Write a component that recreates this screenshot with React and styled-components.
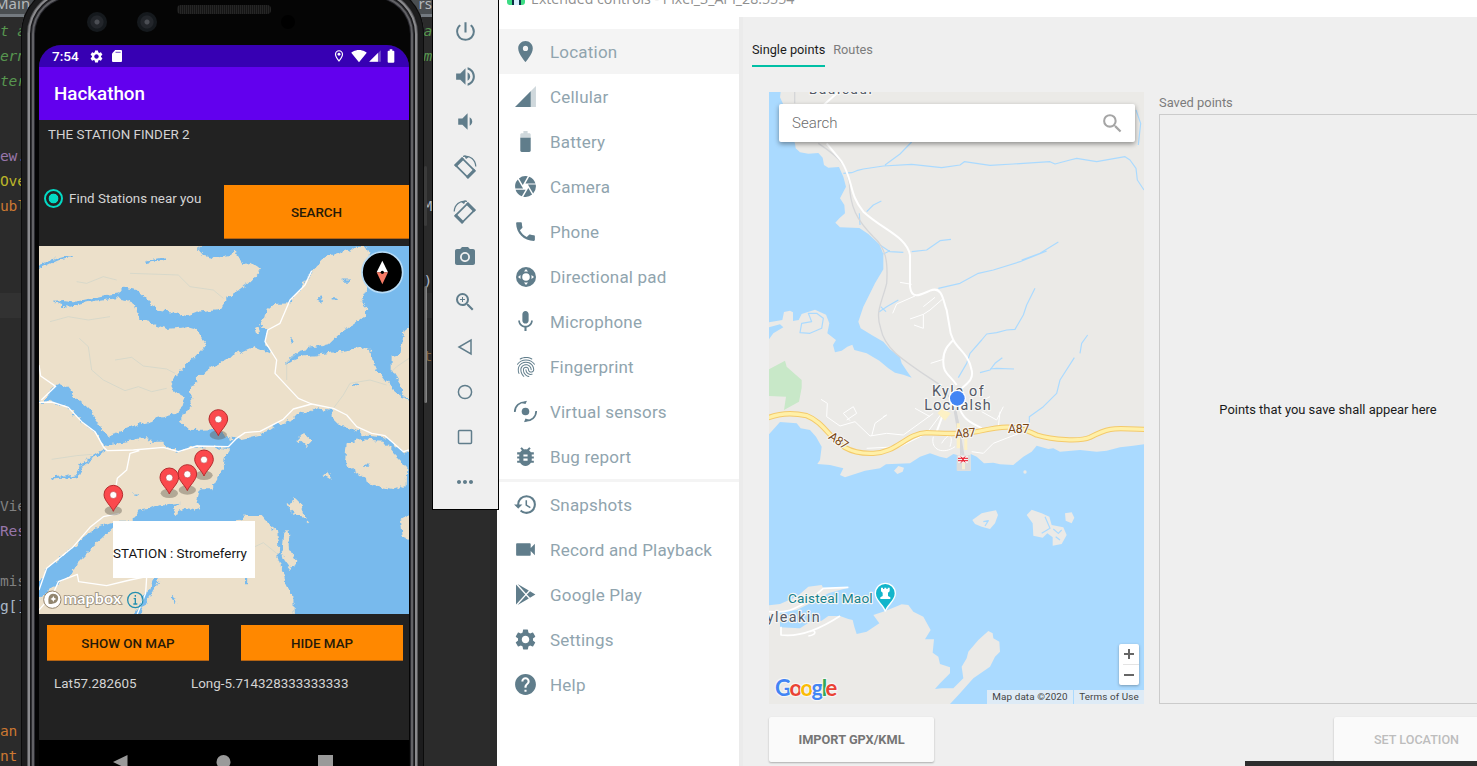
import React from "react";
import styled, { createGlobalStyle } from "styled-components";
import {
  MdLocationOn, MdCamera, MdPhone, MdMic, MdFingerprint, MdBugReport, MdHistory,
  MdVideocam, MdSettings, MdHelp, MdPowerSettingsNew, MdVolumeUp, MdVolumeDown,
  MdPhotoCamera, MdZoomIn, MdMoreHoriz, MdSearch, MdSignalWifi4Bar, MdOutlineLocationOn,
  MdBatteryFull,
} from "react-icons/md";

const GlobalStyle = createGlobalStyle`
  * { box-sizing: border-box; }
  body { margin: 0; font-family: Roboto, "Liberation Sans", sans-serif; }
`;

const Desktop = styled.div`
  position: relative;
  display: flex;
  width: 1477px;
  height: 766px;
  overflow: hidden;
  background: #2b2b2b;
`;

/* ---------- code editor behind the emulator ---------- */
const Editor = styled.div`
  flex: none;
  width: 497px;
  height: 766px;
  overflow: hidden;
  background: #2b2b2b;
`;
const EditorTabs = styled.div`
  display: flex;
  justify-content: space-between;
  height: 18px;
  padding-right: 65px;
  background: linear-gradient(#4a4e51 0 14px, #747a80 14px 17px, #2b2b2b 17px);
  color: #b4b8bb;
  font: 15px/6px "Noto Sans", sans-serif;
  white-space: pre;
`;
const TabName = styled.span`
  margin-left: -5px;
`;
const CodeLine = styled.div`
  display: flex;
  justify-content: space-between;
  height: 25px;
  padding-right: 65px;
  line-height: 25px;
  font-family: "DejaVu Sans Mono", monospace;
  font-size: 14.6px;
  letter-spacing: -0.2px;
  white-space: pre;
  color: ${(p) => p.$color || "#a9b7c6"};
  font-style: ${(p) => (p.$italic ? "italic" : "normal")};
  background: ${(p) => (p.$active ? "#323232" : "transparent")};
`;
const CodeTail = styled.span`
  color: ${(p) => p.$color || "inherit"};
`;

/* ---------- phone ---------- */
const Phone = styled.div`
  position: absolute;
  left: 21px;
  top: -16px;
  width: 403px;
  height: 830px;
  padding: 0 15px 0 18px;
  border-radius: 50px;
  background: #050505;
  box-shadow: inset 0 0 0 1px #0b0b0b, inset 0 0 0 6px #1c1c1d, inset 0 0 0 7px #555558,
    inset 0 0 0 9px #8a8a8d, inset 0 0 0 10px #161618, inset 0 0 0 11px #2c2c30,
    inset 0 0 0 13px #626266, inset 0 0 0 14px #2a2a30;
`;
const Bezel = styled.div`
  display: flex;
  align-items: flex-end;
  height: 61px;
  padding: 0 0 13px 48px;
`;
const Lens = styled.span`
  width: 20px;
  height: 20px;
  margin-right: 30px;
  border-radius: 50%;
  background: radial-gradient(circle, #4b4e54 0 2px, #23262b 3px 6px, #15191d 7px);
`;
const Speaker = styled.span`
  width: 94px;
  height: 9px;
  margin: 0 10px 18px -10px;
  border-radius: 4px;
  background: repeating-linear-gradient(90deg, #151515 0 1px, #262626 1px 2px);
`;
const Sensor = styled.span`
  width: 14px;
  height: 14px;
  margin-bottom: 3px;
  border-radius: 50%;
  background: #000;
`;
const Screen = styled.div`
  display: flex;
  flex-direction: column;
  width: 370px;
  height: 760px;
  overflow: hidden;
  border-radius: 22px 22px 0 0;
  background: #222;
  color: #d4d4d4;
`;
const StatusBar = styled.div`
  display: flex;
  align-items: center;
  flex: none;
  height: 22px;
  padding: 0 10px 0 13px;
  background: #3700b3;
  color: #fff;
  font-size: 13.6px;
  font-weight: 500;
  svg { display: block; }
`;
const StatusIcons = styled.div`
  display: flex;
  align-items: center;
  gap: ${(p) => p.$gap}px;
  margin-left: ${(p) => p.$push};
`;
const StatusGap = styled.span`
  width: ${(p) => p.$w}px;
`;
const AppBar = styled.div`
  flex: none;
  height: 53px;
  padding-left: 15px;
  background: #6200ee;
  color: #fff;
  font-size: 18.8px;
  font-weight: 500;
  line-height: 55px;
`;
const AppHeading = styled.div`
  flex: none;
  height: 65px;
  padding: 6px 0 0 9px;
  font-size: 13.4px;
  line-height: 17px;
`;
const SearchRow = styled.div`
  display: flex;
  flex: none;
  height: 61px;
`;
const RadioLabel = styled.div`
  display: flex;
  align-items: center;
  gap: 6px;
  width: 185px;
  height: 26px;
  padding-left: 5px;
  font-size: 13.4px;
`;
const RadioDot = styled.span`
  width: 19px;
  height: 19px;
  border: 2px solid #03dac5;
  border-radius: 50%;
  background: radial-gradient(circle, #03dac5 0 4.5px, transparent 5.2px);
`;
const OrangeButton = styled.div`
  width: ${(p) => p.$w}px;
  height: ${(p) => p.$h}px;
  border-bottom: 1px solid #b56413;
  background: #ff8800;
  color: #261a08;
  font-size: 13.4px;
  font-weight: 500;
  line-height: ${(p) => p.$h + 1}px;
  text-align: center;
`;
const PhoneMap = styled.div`
  position: relative;
  flex: none;
  height: 368px;
  svg { display: block; }
`;
const MapPopup = styled.div`
  position: absolute;
  left: 74px;
  top: 275px;
  width: 142px;
  height: 57px;
  background: #fff;
  color: #161616;
  font-size: 13.4px;
  line-height: 65px;
  white-space: nowrap;
`;
const ButtonRow = styled.div`
  display: flex;
  flex: none;
  justify-content: space-between;
  height: 59px;
  padding: 11px 6px 0 8px;
`;
const Coordinates = styled.div`
  display: flex;
  flex: none;
  height: 67px;
  padding-left: 15px;
  font-size: 13.4px;
  line-height: 21px;
`;
const Latitude = styled.span`
  width: 137px;
`;
const NavBar = styled.div`
  display: flex;
  flex: none;
  height: 60px;
  padding: 15px 0 0 74px;
  background: #000;
  svg { display: block; }
`;
const SideKey = styled.div`
  position: absolute;
  left: 424px;
  top: ${(p) => p.$top}px;
  width: 3px;
  height: ${(p) => p.$h}px;
  border-radius: 2px;
  background: ${(p) => (p.$bright ? "linear-gradient(90deg, #4a4a4a, #909090)" : "#3b3b3b")};
`;

/* ---------- emulator toolbar ---------- */
const Toolbar = styled.div`
  position: absolute;
  left: 432px;
  top: -1px;
  display: flex;
  flex-direction: column;
  align-items: center;
  width: 67px;
  height: 511px;
  padding: 9px 1px 0 0;
  border: 1px solid #000;
  background: #efefef;
  color: #607d8b;
`;
const ToolButton = styled.div`
  display: flex;
  align-items: center;
  justify-content: center;
  width: 44px;
  height: 45px;
`;

/* ---------- extended controls window ---------- */
const ControlsWindow = styled.div`
  display: flex;
  flex-direction: column;
  flex: none;
  width: 1040px;
  height: 766px;
  background: #fff;
`;
const TitleBar = styled.div`
  display: flex;
  flex: none;
  height: 17px;
  padding-left: 10px;
  overflow: hidden;
  color: #8f8f8f;
  font: 14.2px/20px "Open Sans", sans-serif;
`;
const AppGlyph = styled.span`
  width: 18px;
  height: 5px;
  margin-right: 6px;
  border-radius: 0 0 3px 3px;
  background: linear-gradient(90deg, #3ddc84 0 5px, #0b3045 5px 7px, #d7effe 7px 12px, #0b3045 12px 14px, #3ddc84 14px);
`;
const TitleText = styled.span`
  height: 20px;
  margin-top: -11px;
  white-space: nowrap;
`;
const WindowBody = styled.div`
  display: flex;
  flex: 1;
`;
const Sidebar = styled.div`
  flex: none;
  width: 242px;
  padding-top: 12px;
  background: #fff;
`;
const SidebarDivider = styled.div`
  height: 3px;
  background: #f4f4f4;
`;
const MenuItem = styled.div`
  display: flex;
  align-items: center;
  gap: 12px;
  height: 45px;
  padding-left: 16px;
  background: ${(p) => (p.$active ? "#f4f4f4" : "transparent")};
  color: #90a4ae;
  font-size: 17px;
  letter-spacing: 0.2px;
  white-space: nowrap;
  svg { display: block; flex: none; color: #607d8b; }
`;
const MenuIcon = styled.span`
  display: flex;
  align-items: center;
  justify-content: center;
  width: 25px;
  height: 25px;
`;
const Content = styled.div`
  display: flex;
  flex-direction: column;
  flex: 1;
  padding-left: 30px;
  background: linear-gradient(90deg, #ebebeb 4px, #efefef 4px);
`;
const Tabs = styled.div`
  display: flex;
  gap: 8px;
  height: 75px;
  margin-left: -17px;
  padding-top: 21px;
`;
const Tab = styled.div`
  height: 29px;
  border-bottom: 2px solid ${(p) => (p.$active ? "#00bfa5" : "transparent")};
  color: ${(p) => (p.$active ? "#1c1c1c" : "#7c7c7c")};
  font-size: 12.75px;
  line-height: 23px;
`;
const Panels = styled.div`
  display: flex;
  gap: 15px;
  height: 612px;
`;
const MapPanel = styled.div`
  position: relative;
  width: 375px;
  height: 612px;
  > svg { display: block; }
`;
const SearchBox = styled.div`
  position: absolute;
  left: 10px;
  top: 12px;
  display: flex;
  align-items: center;
  justify-content: space-between;
  width: 356px;
  height: 38px;
  padding: 0 10px 0 13px;
  border-radius: 2px;
  background: #fff;
  box-shadow: 0 2px 5px rgba(0, 0, 0, 0.4);
  color: #6c6c6c;
  font-size: 15px;
  font-weight: 300;
  svg { color: #a5a5a5; }
`;
const ZoomControl = styled.div`
  position: absolute;
  right: 5px;
  bottom: 19px;
  width: 20px;
  height: 41px;
  border-radius: 2px;
  background: #fff;
  box-shadow: 0 1px 3px rgba(0, 0, 0, 0.3);
  svg { display: block; }
`;
const MapFooter = styled.div`
  position: absolute;
  right: 0;
  bottom: 0;
  display: flex;
  gap: 1px;
  height: 14px;
  color: #444;
  font-size: 9.9px;
  line-height: 14px;
  letter-spacing: 0.1px;
`;
const FooterCell = styled.span`
  width: ${(p) => p.$w}px;
  background: #deebf6;
  text-align: center;
  white-space: nowrap;
`;
const SavedPanel = styled.div`
  display: flex;
  flex-direction: column;
  width: 338px;
`;
const SavedTitle = styled.div`
  height: 22px;
  color: #7c7c7c;
  font-size: 12.9px;
  line-height: 21px;
`;
const SavedList = styled.div`
  display: flex;
  align-items: center;
  justify-content: center;
  flex: 1;
  border: 1px solid #cbcbcb;
  color: #1a1a1a;
  font-size: 12.92px;
`;
const Actions = styled.div`
  display: flex;
  justify-content: space-between;
  width: 730px;
  padding-top: 13px;
`;
const ActionButton = styled.div`
  width: 165px;
  height: 45px;
  border-radius: 2px;
  background: #fafafa;
  box-shadow: 0 1px 2px rgba(0, 0, 0, 0.28);
  color: ${(p) => (p.$disabled ? "#bdbdbd" : "#757575")};
  font-size: ${(p) => (p.$disabled ? 12.6 : 12.75)}px;
  font-weight: ${(p) => (p.$disabled ? 500 : 700)};
  line-height: 46px;
  text-align: center;
`;
const Taskbar = styled.div`
  position: absolute;
  left: 1245px;
  top: 761px;
  width: 232px;
  height: 5px;
  background: #2e2e2e;
`;

/* ---------- drawn icons ---------- */
const CellularIcon = ({ size = 25, fill = "currentColor" }) => (
  <svg width={size} height={size} viewBox="0 0 24 24">
    <path d="M2 22H22V2Z" fill={fill} opacity=".3" />
    <path d="M2 22H17V7Z" fill={fill} />
  </svg>
);
const BatteryIcon = () => (
  <svg width="25" height="25" viewBox="0 0 24 24" fill="currentColor">
    <path d="M17 5.3C17 4.6 16.4 4 15.7 4H14V2H10V4H8.300C7.600 4 7 4.600 7 5.300V9H17Z" opacity=".3" />
    <path d="M7 8.500V20.700C7 21.400 7.600 22 8.300 22H15.700C16.400 22 17 21.400 17 20.700V8.500Z" />
  </svg>
);
const DpadIcon = () => (
  <svg width="24" height="24" viewBox="0 0 24 24">
    <circle cx="12" cy="12" r="10" fill="currentColor" />
    <circle cx="12" cy="12" r="3.800" fill="#fff" />
    <path d="M12 4L14 6.500H10ZM12 20L10 17.500H14ZM4 12L6.500 10V14ZM20 12L17.500 14V10Z" fill="#fff" />
  </svg>
);
const SensorsIcon = () => (
  <svg width="25" height="25" viewBox="0 0 25 25">
    <circle cx="12.500" cy="12.500" r="3.800" fill="currentColor" />
    <path d="M1.800 13C1.800 7 6.500 2.800 13 3M23.200 12C23.200 18 18.500 22.200 12 22" fill="none" stroke="currentColor" strokeWidth="1.700" />
    <path d="M8 4L14 1.800L12.500 5ZM17 21L11 23.200L12.500 19.500Z" fill="currentColor" />
  </svg>
);
const PlayIcon = () => (
  <svg width="25" height="25" viewBox="0 0 25 25" fill="currentColor">
    <path d="M3 2.500L12.200 12.500L3 22.500ZM4.600 2L15.800 8.500L13 11.400ZM4.600 23L15.800 16.500L13 13.600ZM17 9.300L22.400 12.500L17 15.700L13.900 12.500Z" />
  </svg>
);
const RotateIcon = ({ mirror }) => (
  <svg width="26" height="26" viewBox="0 0 26 26">
    <g transform={mirror ? "translate(26 0) scale(-1 1)" : undefined}>
      <path d="M3.500 11.200L10.300 4.400L22.500 16.600L15.700 23.400Z" fill="none" stroke="currentColor" strokeWidth="1.700" />
      <path d="M2 11L10 3L12.200 5.200L4.200 13.200ZM13.800 22.800L21.800 14.800L24 17L16 25Z" fill="currentColor" />
      <path d="M11 2.400C18.500 1.200 23.400 6 23.800 12.500" fill="none" stroke="currentColor" strokeWidth="1.200" />
      <path d="M12 1.200L17 3L14 5Z" fill="currentColor" />
    </g>
  </svg>
);
const BackIcon = () => (
  <svg width="20" height="20" viewBox="0 0 20 20">
    <path d="M16 3V17L4 10Z" fill="none" stroke="currentColor" strokeWidth="1.500" />
  </svg>
);
const HomeIcon = () => (
  <svg width="20" height="20" viewBox="0 0 20 20">
    <circle cx="10" cy="10" r="6.600" fill="none" stroke="currentColor" strokeWidth="1.500" />
  </svg>
);
const OverviewIcon = () => (
  <svg width="20" height="20" viewBox="0 0 20 20">
    <rect x="3.500" y="3.500" width="13" height="13" rx="1" fill="none" stroke="currentColor" strokeWidth="1.500" />
  </svg>
);
const SdIcon = () => (
  <svg width="10" height="12" viewBox="0 0 10 12">
    <path d="M3.200 0H9Q10 0 10 1V11Q10 12 9 12H1Q0 12 0 11V3.500Z" fill="#fff" />
    <path d="M3.500 2.300H8.600" stroke="#3700b3" strokeWidth=".7" />
  </svg>
);

/* ---------- maps ---------- */
const PINS = [[655, 587], [612, 708], [562, 752], [508, 762], [340, 814]];

const LochMap = () => (
  <svg width="370" height="368" viewBox="117 18 1110 1104">
    <defs>
      <filter id="coast" x="0" y="0" width="100%" height="100%">
        <feTurbulence type="fractalNoise" baseFrequency=".05" numOctaves="3" seed="4" result="n" />
        <feDisplacementMap in="SourceGraphic" in2="n" scale="22" xChannelSelector="R" yChannelSelector="G" />
      </filter>
    </defs>
    <rect x="117" y="18" width="1110" height="1104" fill="#78baed" />
    <g filter="url(#coast)" fill="#ece0ca">
      <path d="M80 -30H612L597 28L612 45L650 53L690 45L700 33L716 40L727 75L750 65L775 80L778 95L765 110L745 130L720 150L680 175L670 205L620 212L590 215L555 228L520 215L490 212L468 208L455 190L435 172L410 150L370 140L357 160L320 165L250 180L220 187L190 183L160 185L180 197L210 200L260 190L300 182L350 175L380 180L405 195L412 215L418 240L440 240L465 255L500 267L560 262L590 270L605 290L618 302L612 320L580 355L545 385L510 430L520 450L555 470L548 500L525 522L440 547L400 557L360 575L325 585L308 575L295 545L265 505L225 470L200 440L180 430L165 440L130 480L80 490Z" />
      <path d="M80 485H150L205 503L245 545L285 575L305 612L320 615L345 610L400 600L440 592L450 605L490 605L497 622L530 635L570 620L640 618L690 630L675 655L662 700L635 748L600 748L590 785L600 800L570 812L550 810L525 822L522 800L540 788L500 793L475 793L440 810L410 815L405 835L380 845L340 845L290 862L220 920L140 985L117 1030H80Z" />
      <path d="M80 1170V1110L130 1070L175 1025L215 1000L230 970L280 920L340 865L380 850H700L740 828L785 828L800 845L830 870L838 910L835 960L850 1000L860 1040L880 1070L883 1170Z" />
      <path d="M540 545L555 520L575 490L570 460L580 430L620 390L680 355L760 320L808 340L795 305L800 270L780 260L795 235L800 210L820 192L870 190L900 150L935 95L975 55L1020 40L1070 20L1100 22L1110 60L1100 150L1082 185L1103 205L1090 230L1050 260L1015 285L990 310L900 330L865 355L860 372L890 352L940 345L1020 335L1090 322L1110 330L1118 365L1140 400L1170 440L1210 472L1270 495V650L1210 635L1155 592L1100 587L1060 568L1025 560L995 530V510L950 502L930 520L900 515L880 537L830 552L780 585L710 600L680 592L650 568L570 570Z" />
      <path d="M1270 225L1214 270L1200 345L1175 352L1175 390L1200 430L1212 468L1270 490Z" />
      <path d="M1040 610L1080 598L1150 602L1180 640L1222 682L1220 735L1180 748L1120 735L1060 690L1035 670Z" />
      <path d="M895 600L912 582L935 602L918 622ZM970 705L985 695L995 720ZM860 790L885 778L905 795L917 835L895 830L870 810ZM850 875L866 870L870 925L886 960L875 990L853 960L845 930ZM1270 800L1200 840L1205 890L1270 915ZM922 840L932 848L925 855ZM765 270L775 265L780 278L768 280Z" />
    </g>
    <g fill="none" stroke="#78baed" strokeWidth="7" filter="url(#coast)">
      <path d="M117 80C145 78 155 52 215 48M440 66L495 55M155 715L195 712L235 705L243 675L290 645L315 632M865 365C900 340 920 345 950 342M400 764H416M515 1067L528 1090M738 1010V1030M1025 122H1050M955 175L968 182M995 175H1010M870 302L877 298M1060 435L1075 428M1095 677H1108" />
      <path d="M470 1010L460 1040L435 1075L412 1125" strokeWidth="15" />
    </g>
    <g fill="none" stroke="#cdd4ca" strokeWidth="2">
      <path d="M238 295L265 320L275 390L310 420L375 452L415 440L455 455L500 445M345 360L395 352L430 378L500 387L525 400M230 125L260 130L310 110L350 120M155 658L230 647L275 643M390 100L480 103L535 105L570 140L640 150L670 175M150 245L205 230L265 240L330 230" />
      <path d="M1227 355L1190 380L1175 395M1000 505L1030 465L1050 430L1110 420L1160 435M765 920L790 908L830 940M860 420V365L890 340" />
    </g>
    <g fill="none" stroke="#fff" strokeWidth="4" strokeLinejoin="round">
      <path d="M117 375L122 408L167 439L124 480M117 487L155 486L205 502L245 545L285 575L310 620L322 632L400 630L490 622L535 635L590 618L685 620L710 595L735 578L780 574L850 538L880 507L935 492L1000 505L1040 525L1070 560L1115 580L1155 587L1210 635L1227 630M935 492L895 475L825 400L830 360L795 305L803 270L840 250L870 180L915 135L935 92M418 632L390 640L380 690L352 715L345 755M358 820L310 830L270 862L220 920L140 985L117 1050M117 1110L160 1060L175 1025L232 1003L236 1025L320 1037L390 1020L440 1010L437 1060L412 1122" />
    </g>
    {PINS.map(([x, y]) => (
      <g key={x} transform={`translate(${x} ${y})`}>
        <ellipse cy="-2" rx="26" ry="14" fill="#5c5549" opacity=".4" />
        <path d="M0 0C-5 -14 -28 -32 -28 -50A28 28 0 0 1 28 -50C28 -32 5 -14 0 0Z" fill="#fb494d" stroke="#b52a2c" strokeWidth="3" />
        <circle cy="-49" r="10.500" fill="#fff" stroke="#b52a2c" strokeWidth="1.500" />
      </g>
    ))}
    <circle cx="1147" cy="97" r="61" fill="#000" stroke="#b7dcf7" strokeWidth="5" />
    <path d="M1147 62L1164 97H1130Z" fill="#fff" />
    <path d="M1147 133L1164 97H1130Z" fill="#f67b66" />
    <circle cx="1147" cy="97" r="5" fill="#000" />
    <g transform="translate(0 720)">
      <circle cx="157" cy="359" r="26" fill="#fff" stroke="#96866e" strokeWidth="3" />
      <path d="M146 371C143 352 147 342 159 341C172 341 177 351 173 361C169 371 158 373 146 371Z" fill="#92866f" />
      <path d="M160 348L163 354L169 357L163 360L160 366L157 360L151 357L157 354Z" fill="#fff" />
      <text x="191" y="373" fontFamily="Lato" fontWeight="700" fontSize="48" textLength="173" fill="#fff" stroke="#958b78" strokeWidth="5" paintOrder="stroke">mapbox</text>
      <circle cx="406" cy="360" r="23" fill="none" stroke="#258fb0" strokeWidth="4" />
      <path d="M401 356H406V372M400 372H412M406 345V350" fill="none" stroke="#258fb0" strokeWidth="4" />
    </g>
  </svg>
);

const haloText = { paintOrder: "stroke", stroke: "#f6f6f4", strokeWidth: 7, strokeLinejoin: "round" };

const KyleMap = () => (
  <svg width="375" height="612" viewBox="27 276 1125 1836">
    <rect x="27" y="276" width="1125" height="1836" fill="#ebeae7" />
    <g fill="#aadaff">
      <path d="M27 276H62L60 292L72 318L90 400L105 430L107 445L120 457L145 461L175 459L188 473L192 495L205 503L237 501L250 530L258 560L240 595L253 615L255 640L238 655L226 668L240 682L298 684L325 702L358 733L370 762V808L345 850L325 890L310 920L300 950L295 965L302 985L335 1005L370 1025L390 1048L420 1072L425 1090L442 1115L455 1133L430 1124L405 1118L385 1105L358 1082L320 1060L283 1050L277 1034L262 1040L245 1052L225 1057L219 1035L228 1020L202 1000L208 970L198 944L165 929L125 942L116 960L99 963V937L90 932L72 936L67 960L27 967Z" />
      <path d="M27 982L60 973L70 982L40 1000L27 1018Z" />
      <path d="M27 1303L60 1266L110 1270L122 1285L150 1290L168 1310L185 1340L180 1380L172 1392L210 1395L250 1405L240 1425L255 1432L315 1412L360 1405L378 1393L450 1390L480 1370L510 1360L540 1370L560 1375L580 1362L592 1365V1412H632V1362L650 1370L672 1390L700 1388L720 1393L760 1395L790 1370L815 1355L830 1337L865 1347L880 1345L900 1355L960 1350L1010 1355L1040 1352L1080 1342L1120 1337L1152 1333V2112H570L600 2080L640 2035L690 2000L705 1970L720 1955L718 1925L700 1915L698 1900L685 1893L655 1920L625 1955L620 1975L605 2000L610 2035L580 2065H545L525 2067L540 2050L570 2020V2002L540 1992L535 1970L518 1958L522 1918L495 1918L512 1890L490 1850L460 1835L445 1815L425 1813L376 1833L340 1845L358 1870L320 1895L290 1902L283 1880L278 1860L265 1857L240 1848L205 1848L185 1862L150 1865L120 1885L60 1882V1835L110 1830L170 1800L205 1780L270 1762L190 1765L185 1755L145 1760L110 1790L60 1812L27 1816Z" />
    </g>
    <g fill="#ebeae7">
      <path d="M637 1560L665 1540L685 1535L708 1531L714 1545L705 1570L690 1587L665 1580L645 1572ZM800 1545L815 1529L845 1540L868 1550L875 1575L910 1582L920 1605L905 1632L878 1637L878 1612L862 1600L848 1613L820 1607L818 1570ZM915 1540L935 1537L943 1553L935 1570L917 1562ZM402 1412L415 1398L432 1403L428 1415L412 1422Z" />
      <circle cx="795" cy="1416" r="5" />
    </g>
    <path d="M27 1108L75 1082L80 1100L125 1140V1163L117 1205L72 1230L78 1190L27 1188Z" fill="#c8e8c8" />
    <g fill="none" stroke="#aadaff" strokeWidth="3.500" strokeLinejoin="round">
      <path d="M250 520L275 518L290 512L310 507L370 498L455 493L545 503L600 495L613 485L690 496L760 492L870 485L885 492L930 480L950 475L1010 485L1095 470L1110 480L1128 505L1132 540L1152 570M375 495L420 462L455 426M1128 330L1142 370L1135 435M320 635L340 615L364 603M300 675L298 640M360 735L390 755L430 757M455 755L500 750L540 722L573 718M785 780L840 760L895 726M370 762L390 752M535 865L600 850L655 820L700 810L780 785L860 753M358 935L380 920L415 900M362 920L378 935M595 1133L620 1090L630 1060L665 1020L680 1002L710 998L740 990L765 988L790 945L800 915L825 865M660 1118L690 1110L705 1090L727 1073M690 1107L710 1105L762 1107M983 1005L965 1030L960 1060M943 1073L900 1140L890 1180L850 1220L808 1250V1268M120 998L125 970L155 965L145 940L170 940L190 955L185 985L150 1000ZM670 1565L685 1562L675 1578M855 1550L870 1585L845 1600M880 1587L895 1600L905 1590M887 1610L900 1620" />
    </g>
    <g fill="none" stroke="#d5d6d8" strokeWidth="4">
      <path d="M104 276V310M175 430C250 480 260 500 268 550C270 620 290 660 340 710C380 745 384 790 380 850C365 910 345 935 362 985C375 1050 430 1080 540 1155C595 1210 602 1280 603 1400" />
      <path d="M585 1230L615 1400" strokeWidth="9" />
    </g>
    <g fill="none" stroke="#fff" strokeLinejoin="round">
      <path d="M235 276L180 325M200 430L245 485C280 540 265 580 310 635C370 690 440 710 450 765V860C455 900 480 885 510 872C550 855 550 910 560 930L572 1000L580 1020C565 1035 550 1050 550 1080C548 1120 565 1120 590 1155M580 1020C595 1050 625 1060 635 1110C642 1140 620 1150 600 1170L595 1215C610 1265 640 1270 665 1285M550 1240L530 1295" strokeWidth="6" />
      <path d="M420 847L455 853M465 888L410 912L398 940M548 897L510 930L490 943L450 957M490 943V985L462 975M525 892L490 920M550 1078L512 1090M183 1198L202 1210L200 1250L240 1278L285 1265L330 1308L380 1300L430 1305L520 1240M270 1262L250 1240L280 1220L290 1240L260 1260M335 1308L345 1270L380 1245L370 1250M320 1345L420 1340L500 1300L545 1240M520 1310C510 1350 550 1365 585 1340M545 1330C570 1290 580 1310 570 1340M635 1355L670 1360L700 1330L790 1295M665 1235L710 1260L730 1220M690 1190L650 1210M715 1280L720 1235M465 1225L510 1250" strokeWidth="3" />
      <path d="M27 1835C80 1840 100 1830 150 1800L190 1765L265 1762M63 1880V1905C100 1910 160 1900 240 1848M145 1908C175 1905 165 1885 150 1895" strokeWidth="5" />
    </g>
    <path d="M533 1240L545 1225L572 1240L555 1262ZM590 1270H600V1345H590ZM613 1300H622V1350H613Z" fill="#fdf1c5" />
    <g fill="none" strokeLinejoin="round">
      <path d="M20 1255C60 1238 100 1238 140 1247C215 1275 215 1365 340 1360C410 1358 440 1300 500 1298C560 1300 590 1305 650 1295C720 1280 760 1270 830 1305C880 1320 960 1325 990 1312C1060 1275 1070 1288 1160 1288" stroke="#f4ca6b" strokeWidth="16" />
      <path d="M20 1255C60 1238 100 1238 140 1247C215 1275 215 1365 340 1360C410 1358 440 1300 500 1298C560 1300 590 1305 650 1295C720 1280 760 1270 830 1305C880 1320 960 1325 990 1312C1060 1275 1070 1288 1160 1288" stroke="#fff0a8" strokeWidth="10" />
    </g>
    <g fontFamily="Roboto" fontSize="37" fill="#7a4712" {...haloText}>
      <text x="585" y="1312" textLength="62" transform="rotate(-5 615 1300)">A87</text>
      <text x="744" y="1298" textLength="64">A87</text>
      <text x="205" y="1334" textLength="62" transform="rotate(35 235 1322)">A87</text>
    </g>
    <g fontFamily="Roboto" fontSize="43" fill="#535966" {...haloText}>
      <text x="516" y="1188" textLength="155">Kyle of</text>
      <text x="493" y="1230" textLength="199">Lochalsh</text>
      <text x="20" y="1866" textLength="159">yleakin</text>
      <text x="147" y="283" fontSize="40" textLength="188">Badicaul</text>
    </g>
    <text x="84" y="1809" fontFamily="Roboto" fontSize="41" textLength="254" fill="#14808b" {...haloText}>Caisteal Maol</text>
    <g transform="translate(376 1783)">
      <path d="M0 52C-5 30 -30 22 -30 -3A30 30 0 0 1 30 -3C30 22 5 30 0 52Z" fill="#12b5cb" stroke="#fff" strokeWidth="4" />
      <path d="M-13 -20H-7V-16H-3V-20H3V-16H7V-20H13V-9L8 -5V5L15 9V14H-15V9L-8 5V-5L-13 -9Z" fill="#fff" />
    </g>
    <circle cx="592" cy="1195" r="26" fill="#fff" />
    <circle cx="592" cy="1195" r="22" fill="#4285f4" />
    <rect x="590" y="1365" width="41" height="47" fill="#dcdcdb" />
    <rect x="606" y="1388" width="9" height="20" fill="#f6efd6" />
    <rect x="594" y="1367" width="30" height="22" fill="#f3f1f0" />
    <path d="M594 1375H624M594 1382H624M602 1370L612 1379L602 1388M616 1370L606 1378L616 1387" fill="none" stroke="#ea1c2c" strokeWidth="3" />
    <text x="45" y="2088" fontFamily="Lato" fontSize="66" fontWeight="700" textLength="187" {...haloText}>
      <tspan fill="#4285f4">G</tspan><tspan fill="#ea4335">o</tspan><tspan fill="#fbbc05">o</tspan><tspan fill="#4285f4">g</tspan><tspan fill="#34a853">l</tspan><tspan fill="#ea4335">e</tspan>
    </text>
  </svg>
);

/* ---------- data ---------- */
const CODE = [
  { t: "t a", c: "#57964f", italic: true, tail: "a" },
  { t: "ern", c: "#57964f", italic: true, tail: "m" },
  { t: "ter", c: "#57964f", italic: true },
  {}, {},
  { t: "ew.", c: "#9876aa" },
  { t: "Ove", c: "#bbb529" },
  { t: "ubl", c: "#cc7832", tail: "M", tc: "#a9b7c6" },
  {}, {},
  { tail: ")" },
  { active: true },
  {}, { tail: "t", tc: "#80643f" }, {}, {}, {}, {}, {},
  { t: "Vie", c: "#808080" },
  { t: "Res", c: "#9876aa" },
  {},
  { t: "mis", c: "#808080" },
  { t: "g[]" },
  {}, {}, {}, {},
  { t: "an", c: "#cc7832" },
  { t: "nt", c: "#cc7832" },
];

const TOOLS = [
  <MdPowerSettingsNew size={25} />, <MdVolumeUp size={25} />, <MdVolumeDown size={25} />,
  <RotateIcon />, <RotateIcon mirror />, <MdPhotoCamera size={24} />, <MdZoomIn size={24} />,
  <BackIcon />, <HomeIcon />, <OverviewIcon />, <MdMoreHoriz size={24} />,
];

const MENU = [
  ["Location", <MdLocationOn size={25} />],
  ["Cellular", <CellularIcon />],
  ["Battery", <BatteryIcon />],
  ["Camera", <MdCamera size={25} />],
  ["Phone", <MdPhone size={25} />],
  ["Directional pad", <DpadIcon />],
  ["Microphone", <MdMic size={25} />],
  ["Fingerprint", <MdFingerprint size={24} />],
  ["Virtual sensors", <SensorsIcon />],
  ["Bug report", <MdBugReport size={25} />],
];
const MENU_LOWER = [
  ["Snapshots", <MdHistory size={25} />],
  ["Record and Playback", <MdVideocam size={25} />],
  ["Google Play", <PlayIcon />],
  ["Settings", <MdSettings size={25} />],
  ["Help", <MdHelp size={25} />],
];

const Item = ({ label, icon, active }) => (
  <MenuItem $active={active}>
    <MenuIcon>{icon}</MenuIcon>
    {label}
  </MenuItem>
);

export default function App() {
  return (
    <Desktop>
      <GlobalStyle />
      <Editor>
        <EditorTabs><TabName>Main</TabName><CodeTail>rs</CodeTail></EditorTabs>
        {CODE.map((l, i) => (
          <CodeLine key={i} $color={l.c} $italic={l.italic} $active={l.active}>
            <span>{l.t}</span>
            <CodeTail $color={l.tc}>{l.tail}</CodeTail>
          </CodeLine>
        ))}
      </Editor>

      <ControlsWindow>
        <TitleBar>
          <AppGlyph />
          <TitleText>Extended controls - Pixel_3_API_28:5554</TitleText>
        </TitleBar>
        <WindowBody>
          <Sidebar>
            {MENU.map(([label, icon], i) => <Item key={label} label={label} icon={icon} active={i === 0} />)}
            <SidebarDivider />
            {MENU_LOWER.map(([label, icon]) => <Item key={label} label={label} icon={icon} />)}
          </Sidebar>
          <Content>
            <Tabs>
              <Tab $active>Single points</Tab>
              <Tab>Routes</Tab>
            </Tabs>
            <Panels>
              <MapPanel>
                <KyleMap />
                <SearchBox>Search<MdSearch size={25} /></SearchBox>
                <ZoomControl>
                  <svg width="20" height="41" viewBox="0 0 20 41">
                    <path d="M5 10H15M10 5V15M5 31H15" stroke="#666" strokeWidth="2" />
                    <path d="M4 20.500H20" stroke="#e4e4e4" />
                  </svg>
                </ZoomControl>
                <MapFooter>
                  <FooterCell $w={86}>Map data ©2020</FooterCell>
                  <FooterCell $w={70}>Terms of Use</FooterCell>
                </MapFooter>
              </MapPanel>
              <SavedPanel>
                <SavedTitle>Saved points</SavedTitle>
                <SavedList>Points that you save shall appear here</SavedList>
              </SavedPanel>
            </Panels>
            <Actions>
              <ActionButton>IMPORT GPX/KML</ActionButton>
              <ActionButton $disabled>SET LOCATION</ActionButton>
            </Actions>
          </Content>
        </WindowBody>
      </ControlsWindow>

      <SideKey $top={166} $h={60} />
      <SideKey $top={286} $h={117} $bright />
      <Phone>
        <Bezel>
          <Lens /><Lens /><Speaker /><Sensor />
        </Bezel>
        <Screen>
          <StatusBar>
            7:54
            <StatusIcons $gap={8} $push="10px"><MdSettings size={15} /><SdIcon /></StatusIcons>
            <StatusIcons $gap={1} $push="auto">
              <MdOutlineLocationOn size={14} />
              <StatusGap $w={3} />
              <MdSignalWifi4Bar size={16} />
              <CellularIcon size={14} fill="#fff" />
              <MdBatteryFull size={16} />
            </StatusIcons>
          </StatusBar>
          <AppBar>Hackathon</AppBar>
          <AppHeading>THE STATION FINDER 2</AppHeading>
          <SearchRow>
            <RadioLabel><RadioDot />Find Stations near you</RadioLabel>
            <OrangeButton $w={185} $h={54}>SEARCH</OrangeButton>
          </SearchRow>
          <PhoneMap>
            <LochMap />
            <MapPopup>STATION : Stromeferry</MapPopup>
          </PhoneMap>
          <ButtonRow>
            <OrangeButton $w={162} $h={36}>SHOW ON MAP</OrangeButton>
            <OrangeButton $w={162} $h={36}>HIDE MAP</OrangeButton>
          </ButtonRow>
          <Coordinates>
            <Latitude>Lat57.282605</Latitude>
            <span>Long-5.714328333333333</span>
          </Coordinates>
          <NavBar>
            <svg width="222" height="16" viewBox="0 0 222 16" fill="#9a9a9a">
              <path d="M14.500 0V14L0 7Z" />
              <circle cx="110.500" cy="7" r="7" />
              <rect x="205" y="0" width="15" height="15" />
            </svg>
          </NavBar>
        </Screen>
      </Phone>

      <Toolbar>
        {TOOLS.map((icon, i) => <ToolButton key={i}>{icon}</ToolButton>)}
      </Toolbar>
      <Taskbar />
    </Desktop>
  );
}
